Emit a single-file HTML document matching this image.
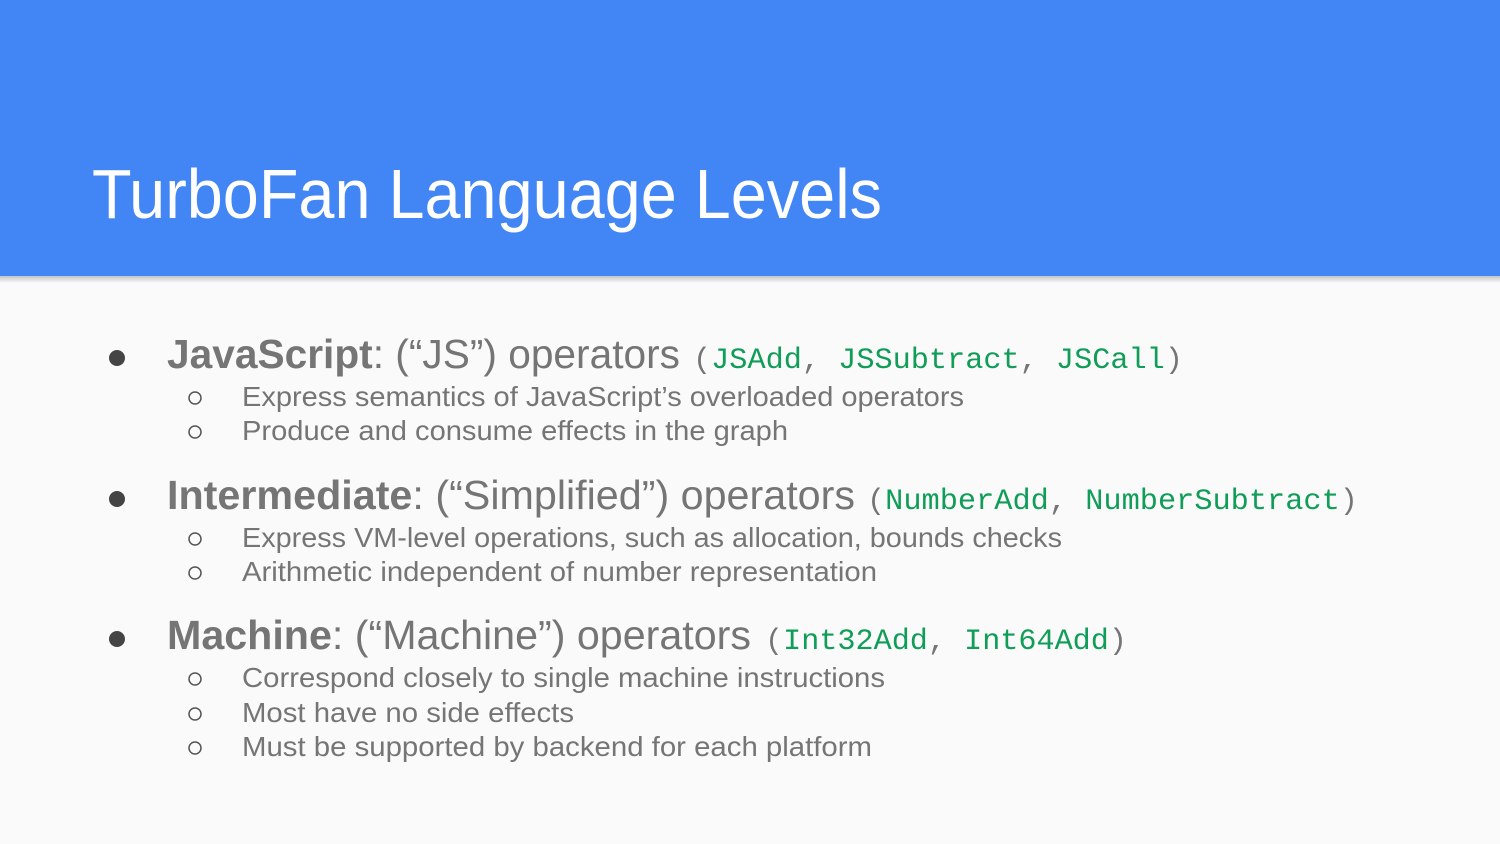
<!DOCTYPE html>
<html><head><meta charset="utf-8"><style>
html,body{margin:0;padding:0;width:1500px;height:844px;overflow:hidden;background:#fafafa}
svg{display:block}
.s{font-family:"Liberation Sans",sans-serif;fill:#757575}
.m{font-family:"Liberation Mono",monospace;fill:#757575}
.g{fill:#0f9d58}
</style></head><body>
<svg width="1500" height="844" xmlns="http://www.w3.org/2000/svg">
<defs><linearGradient id="sh" x1="0" y1="0" x2="0" y2="1"><stop offset="0" stop-color="#000" stop-opacity="0.22"/><stop offset="1" stop-color="#000" stop-opacity="0"/></linearGradient></defs>
<rect x="0" y="0" width="1500" height="844" fill="#fafafa"/>
<rect x="0" y="276" width="1500" height="7" fill="url(#sh)"/>
<rect x="0" y="0" width="1500" height="276" fill="#4285f4"/>
<text x="92" y="218" font-family="Liberation Sans, sans-serif" font-size="70" fill="#fff" textLength="790" lengthAdjust="spacingAndGlyphs">TurboFan Language Levels</text>

<circle cx="117" cy="358" r="8" fill="#444"/>
<text class="s" x="167" y="368" font-size="41" textLength="513" lengthAdjust="spacingAndGlyphs"><tspan font-weight="bold">JavaScript</tspan>: (“JS”) operators</text>
<text class="m" x="693" y="368" font-size="30" textLength="490" lengthAdjust="spacingAndGlyphs">(<tspan class="g">JSAdd</tspan>, <tspan class="g">JSSubtract</tspan>, <tspan class="g">JSCall</tspan>)</text>
<circle cx="195" cy="398" r="6" fill="none" stroke="#555" stroke-width="1.5"/>
<text class="s" x="242" y="406" font-size="28" textLength="722" lengthAdjust="spacingAndGlyphs">Express semantics of JavaScript’s overloaded operators</text>
<circle cx="195" cy="432" r="6" fill="none" stroke="#555" stroke-width="1.5"/>
<text class="s" x="242" y="440" font-size="28" textLength="546" lengthAdjust="spacingAndGlyphs">Produce and consume effects in the graph</text>

<circle cx="117" cy="499" r="8" fill="#444"/>
<text class="s" x="167" y="509" font-size="41" textLength="688" lengthAdjust="spacingAndGlyphs"><tspan font-weight="bold">Intermediate</tspan>: (“Simplified”) operators</text>
<text class="m" x="867" y="509" font-size="30" textLength="491" lengthAdjust="spacingAndGlyphs">(<tspan class="g">NumberAdd</tspan>, <tspan class="g">NumberSubtract</tspan>)</text>
<circle cx="195" cy="539" r="6" fill="none" stroke="#555" stroke-width="1.5"/>
<text class="s" x="242" y="547" font-size="28" textLength="820" lengthAdjust="spacingAndGlyphs">Express VM-level operations, such as allocation, bounds checks</text>
<circle cx="195" cy="573" r="6" fill="none" stroke="#555" stroke-width="1.5"/>
<text class="s" x="242" y="581" font-size="28" textLength="635" lengthAdjust="spacingAndGlyphs">Arithmetic independent of number representation</text>

<circle cx="117" cy="639" r="8" fill="#444"/>
<text class="s" x="167" y="649" font-size="41" textLength="584" lengthAdjust="spacingAndGlyphs"><tspan font-weight="bold">Machine</tspan>: (“Machine”) operators</text>
<text class="m" x="765" y="649" font-size="30" textLength="362" lengthAdjust="spacingAndGlyphs">(<tspan class="g">Int32Add</tspan>, <tspan class="g">Int64Add</tspan>)</text>
<circle cx="195" cy="679" r="6" fill="none" stroke="#555" stroke-width="1.5"/>
<text class="s" x="242" y="687" font-size="28" textLength="643" lengthAdjust="spacingAndGlyphs">Correspond closely to single machine instructions</text>
<circle cx="195" cy="714" r="6" fill="none" stroke="#555" stroke-width="1.5"/>
<text class="s" x="242" y="722" font-size="28" textLength="332" lengthAdjust="spacingAndGlyphs">Most have no side effects</text>
<circle cx="195" cy="748" r="6" fill="none" stroke="#555" stroke-width="1.5"/>
<text class="s" x="242" y="756" font-size="28" textLength="630" lengthAdjust="spacingAndGlyphs">Must be supported by backend for each platform</text>
</svg>
</body></html>
